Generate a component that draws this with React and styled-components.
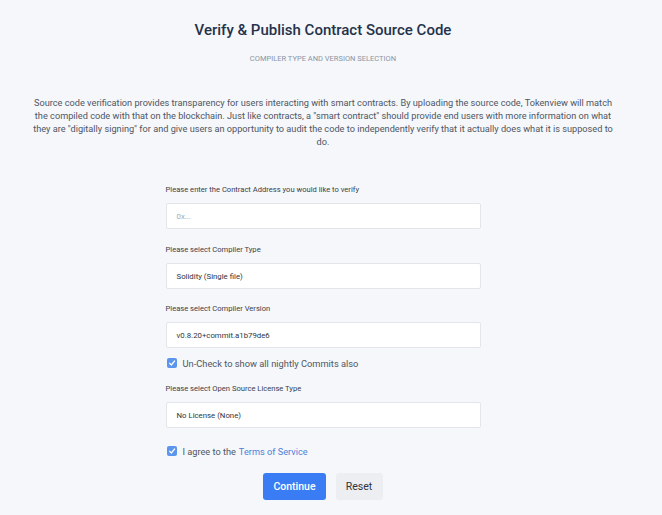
import React from "react";
import styled, { createGlobalStyle } from "styled-components";

const Global = createGlobalStyle`
  html, body { margin: 0; padding: 0; background: #f5f7fa; }
  body { font-family: Roboto, "Liberation Sans", Arial, sans-serif; }
  * { box-sizing: border-box; }
`;

const Page = styled.div`
  width: 646px;
  min-height: 515px;
  display: flex;
  flex-direction: column;
  align-items: center;
  padding-top: 20px;
`;

const Title = styled.h1`
  margin: 0;
  font-size: 15px;
  line-height: 20px;
  font-weight: 500;
  color: #25324a;
`;

const Subtitle = styled.div`
  margin-top: 14px;
  font-size: 7.5px;
  line-height: 10px;
  color: #8a94a6;
  text-transform: uppercase;
`;

const Intro = styled.p`
  margin: 32px 0 0;
  width: 590px;
  text-align: center;
  font-size: 9.2px;
  line-height: 13px;
  color: #4f5664;
`;

const Form = styled.form`
  width: 315px;
  margin-top: 36px;
  display: flex;
  flex-direction: column;
`;

const Label = styled.label`
  display: block;
  font-size: 7.6px;
  line-height: 12px;
  color: #3a404c;
  margin-top: ${(p) => p.$mt || 0}px;
  margin-bottom: 7px;
`;

const Field = styled.div`
  height: 26px;
  background: #ffffff;
  border: 1.5px solid #e2e5ea;
  border-radius: 2px;
  display: flex;
  align-items: center;
  padding-left: 10px;
  font-size: 7.8px;
  color: ${(p) => (p.$placeholder ? "#a4abb6" : "#2f3440")};
`;

const CheckRow = styled.div`
  display: flex;
  align-items: center;
  gap: 6px;
  height: 14px;
  margin-top: ${(p) => p.$mt || 0}px;
  font-size: ${(p) => p.$fs || 9.3}px;
  color: #4f5664;
  padding-left: 1px;
`;

const Box = styled.span`
  width: 10px;
  height: 10px;
  border-radius: 2px;
  background: #5a95ee;
  display: inline-flex;
  align-items: center;
  justify-content: center;
`;

const Link = styled.a`
  color: #4f7fd8;
  text-decoration: none;
  margin-left: 3px;
`;

const Buttons = styled.div`
  display: flex;
  justify-content: center;
  gap: 10px;
  margin-top: 15px;
`;

const Button = styled.button`
  height: 27px;
  padding: 0 10px;
  border: none;
  border-radius: 3px;
  font-family: inherit;
  font-size: 10.5px;
  font-weight: ${(p) => (p.$primary ? 500 : 400)};
  background: ${(p) => (p.$primary ? "#3a7cf4" : "#eceef1")};
  color: ${(p) => (p.$primary ? "#ffffff" : "#2f3440")};
  min-width: ${(p) => (p.$primary ? 61 : 47)}px;
`;

const Check = () => (
  <Box>
    <svg width="8" height="8" viewBox="0 0 8 8">
      <path d="M1.5 4.2 L3.3 6 L6.6 2" stroke="#fff" strokeWidth="1.2" fill="none" strokeLinecap="round" strokeLinejoin="round" />
    </svg>
  </Box>
);

export default function App() {
  return (
    <>
      <Global />
      <Page>
        <Title>Verify &amp; Publish Contract Source Code</Title>
        <Subtitle>Compiler Type and Version Selection</Subtitle>
        <Intro>
          Source code verification provides transparency for users interacting with smart contracts. By uploading the source code, Tokenview will match the compiled code with that on the blockchain. Just like contracts, a "smart contract" should provide end users with more information on what they are "digitally signing" for and give users an opportunity to audit the code to independently verify that it actually does what it is supposed to do.
        </Intro>
        <Form>
          <Label>Please enter the Contract Address you would like to verify</Label>
          <Field $placeholder>0x...</Field>
          <Label $mt={15}>Please select Compiler Type</Label>
          <Field>Solidity (Single file)</Field>
          <Label $mt={14}>Please select Compiler Version</Label>
          <Field>v0.8.20+commit.a1b79de6</Field>
          <CheckRow $mt={8}>
            <Check />
            <span>Un-Check to show all nightly Commits also</span>
          </CheckRow>
          <Label $mt={13}>Please select Open Source License Type</Label>
          <Field>No License (None)</Field>
          <CheckRow $mt={16} $fs={9.2}>
            <Check />
            <span>
              I agree to the<Link href="#">Terms of Service</Link>
            </span>
          </CheckRow>
          <Buttons>
            <Button type="button" $primary>Continue</Button>
            <Button type="button">Reset</Button>
          </Buttons>
        </Form>
      </Page>
    </>
  );
}
